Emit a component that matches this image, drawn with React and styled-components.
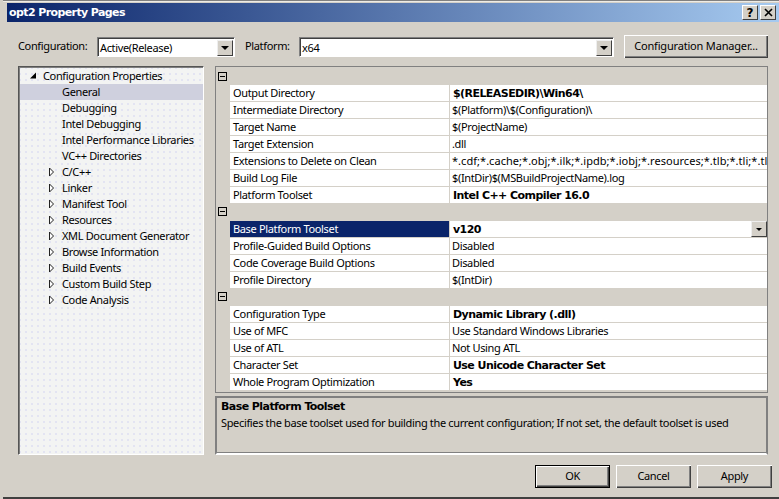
import React from "react";
import styled, { createGlobalStyle } from "styled-components";

const Global = createGlobalStyle`
  html, body { margin: 0; padding: 0; background: #d4d0c8; }
  * { box-sizing: border-box; }
`;

const FONT = `"Noto Sans", "Liberation Sans", sans-serif`;
const BOLD = `"DejaVu Sans", sans-serif`;
const TRACK = "-0.35px";
const BOLD_TRACK = "-0.56px";

const Win = styled.div`
  position: relative; width: 779px; height: 499px; overflow: hidden;
  background: #d4d0c8; font-family: ${FONT}; font-size: 11px; color: #000; letter-spacing: ${TRACK};
  border-left: 3px solid #d4d0c8;
  &::before { content: ""; position: absolute; left: -1px; top: 0; bottom: 0; width: 1px; background: #6f6f6f; }
  &::after { content: ""; position: absolute; left: -3px; right: 0; bottom: 0; height: 2px; background: #404040; }
`;
const TopEdge = styled.div`
  position: absolute; left: -3px; right: 0; top: 0; height: 2px;
  background: linear-gradient(#808080 0 1px, #eeece6 1px);
`;
const TitleBar = styled.div`
  position: absolute; left: 4px; right: 0; top: 3px; height: 19px;
  background: linear-gradient(90deg, #0a246a, #a6caf0);
  color: #fff; font: bold 11px ${BOLD};
  display: flex; align-items: center; padding-left: 2px;
`;
const TitleText = styled.span`flex: 1; letter-spacing: -0.6px;`;
const CapBtn = styled.button`
  width: 16px; height: 15px; margin-right: 2px; padding: 0; background: #d4d0c8;
  border: 1px solid; border-color: #fff #404040 #404040 #fff;
  display: flex; align-items: center; justify-content: center;
  color: #000; font: bold 12px ${BOLD}; line-height: 12px;
  &:last-child { margin-right: 3px; }
`;
const Label = styled.span`
  position: absolute; left: ${p => p.$x}px; top: 38px; height: 16px; line-height: 16px; white-space: nowrap;
`;
const Combo = styled.div`
  position: absolute; left: ${p => p.$x}px; top: 37px; width: ${p => p.$w}px; height: 20px;
  background: #fff; border: 1px solid; border-color: #808080 #fff #fff #808080;
  box-shadow: inset 1px 1px 0 #404040;
  padding: 1px 0 0 2px; line-height: 17px; display: flex; justify-content: space-between;
`;
const Arrow = styled.span`
  width: 16px; height: 16px; margin: 1px 1px 0 0; background: #d4d0c8; flex: none;
  border: 1px solid; border-color: #eee #404040 #404040 #eee;
  display: flex; align-items: center; justify-content: center;
  &::after { content: ""; border: 4px solid transparent; border-top: 4px solid #000; border-bottom: 0; }
`;
const PushBtn = styled.button`
  position: absolute; left: ${p => p.$x}px; top: ${p => p.$y}px; width: ${p => p.$w}px; height: ${p => p.$h}px;
  background: #d4d0c8; padding: 0 0 2px; font: 11px ${FONT}; letter-spacing: ${p => (p.$wide ? "-0.18px" : TRACK)}; color: #000;
  border: ${p => (p.$def ? "1px solid #000" : "0")};
  box-shadow: inset 1px 1px 0 #fff, inset -1px -1px 0 #404040, inset -2px -2px 0 #808080;
`;
const Tree = styled.div`
  position: absolute; left: 15px; top: 66px; width: 186px; height: 389px; padding: 1px 0 0 1px;
  background-color: #f3f4f3;
  background-image: radial-gradient(circle at 1px 1px, #e3e4f2 1px, transparent 1.2px);
  background-size: 6px 6px;
  border: 1px solid; border-color: #555 #fff #fff #555;
  box-shadow: inset 1px 1px 0 #808080;
`;
const TreeRow = styled.div`
  height: 16px; line-height: 16px; position: relative; white-space: nowrap;
  padding-left: ${p => p.$indent}px;
  background: ${p => (p.$sel ? "#cfd0de" : "transparent")};
`;
const Tri = styled.svg`position: absolute; left: ${p => p.$x}px; top: 3px;`;

const Grid = styled.div`
  position: absolute; left: 212px; top: 66px; width: 553px; height: 326px;
  border: 1px solid #808080; border-width: 1px 1px 0 1px; padding-top: 1px;
  background: #d4d0c8;
  box-shadow: 0 1px 0 #808080;
`;
const Cat = styled.div`height: ${p => p.$h}px; position: relative;`;
const Minus = styled.span`
  position: absolute; left: 2px; top: ${p => p.$t}px; width: 9px; height: 9px; border: 1px solid #000;
  &::after { content: ""; position: absolute; left: 1px; right: 1px; top: 3px; height: 1px; background: #000; }
`;
const Row = styled.div`
  height: 17px; margin-left: 14px; display: flex; background: #fff;
  border-bottom: 1px solid #d4d0c8;
  &:last-of-type { height: 16px; border-bottom: 0; }
`;
const Name = styled.div`
  width: 220px; flex: none; padding-left: 3px; line-height: 16px; white-space: nowrap;
  background: ${p => (p.$sel ? "#0a246a" : "#fff")}; color: ${p => (p.$sel ? "#fff" : "#000")};
  border-right: 1px solid #d4d0c8;
`;
const Value = styled.div`
  flex: 1; min-width: 0; overflow: hidden; white-space: nowrap; padding-left: ${p => (p.$b ? 3 : 2)}px;
  display: flex; justify-content: space-between; align-items: flex-start;
  font: ${p => (p.$b ? `bold 11px ${BOLD}` : `11px ${FONT}`)};
  line-height: ${p => (p.$b ? 18 : 16)}px;
  letter-spacing: ${p => (p.$b ? BOLD_TRACK : p.$wide ? "0.04px" : TRACK)};
`;
const RowArrow = styled.span`
  width: 16px; height: 16px; flex: none; background: #d4d0c8;
  border: 1px solid; border-color: #eee #404040 #404040 #eee;
  display: flex; align-items: center; justify-content: center;
  &::after { content: ""; border: 3px solid transparent; border-top: 3px solid #000; border-bottom: 0; }
`;
const Desc = styled.div`
  position: absolute; left: 212px; top: 396px; width: 553px; height: 59px;
  border: 2px solid; border-color: #808080 #808080 #fff #808080; padding: 1px 0 0 4px;
  box-shadow: inset 0 -1px 0 #808080;
`;
const DescTitle = styled.div`font: bold 11px ${BOLD}; height: 16px; line-height: 16px; letter-spacing: ${BOLD_TRACK};`;
const DescText = styled.div`height: 16px; line-height: 16px; white-space: nowrap;`;
const RowGroup = styled.section``;

const tree = [
  ["Configuration Properties", 23, "open"],
  ["General", 42, null, true],
  ["Debugging", 42], ["Intel Debugging", 42], ["Intel Performance Libraries", 42], ["VC++ Directories", 42],
  ["C/C++", 42, "closed"], ["Linker", 42, "closed"], ["Manifest Tool", 42, "closed"], ["Resources", 42, "closed"],
  ["XML Document Generator", 42, "closed"], ["Browse Information", 42, "closed"], ["Build Events", 42, "closed"],
  ["Custom Build Step", 42, "closed"], ["Code Analysis", 42, "closed"],
];
const groups = [
  { h: 17, t: 4, rows: [
    ["Output Directory", "$(RELEASEDIR)\\Win64\\", true],
    ["Intermediate Directory", "$(Platform)\\$(Configuration)\\"],
    ["Target Name", "$(ProjectName)"],
    ["Target Extension", ".dll"],
    ["Extensions to Delete on Clean", "*.cdf;*.cache;*.obj;*.ilk;*.ipdb;*.iobj;*.resources;*.tlb;*.tli;*.tlh;*.tmp;*.rsp", false, false, true],
    ["Build Log File", "$(IntDir)$(MSBuildProjectName).log"],
    ["Platform Toolset", "Intel C++ Compiler 16.0", true],
  ]},
  { h: 18, t: 4, rows: [
    ["Base Platform Toolset", "v120", true, true],
    ["Profile-Guided Build Options", "Disabled"],
    ["Code Coverage Build Options", "Disabled"],
    ["Profile Directory", "$(IntDir)"],
  ]},
  { h: 18, t: 4, rows: [
    ["Configuration Type", "Dynamic Library (.dll)", true],
    ["Use of MFC", "Use Standard Windows Libraries"],
    ["Use of ATL", "Not Using ATL"],
    ["Character Set", "Use Unicode Character Set", true],
    ["Whole Program Optimization", "Yes", true],
  ]},
];

export default function App() {
  return (
    <Win>
      <Global />
      <TopEdge />
      <TitleBar>
        <TitleText>opt2 Property Pages</TitleText>
        <CapBtn>?</CapBtn>
        <CapBtn>
          <svg width="9" height="9" viewBox="0 0 9 9"><path d="M1 1L8 8M8 1L1 8" stroke="#000" strokeWidth="1.6" /></svg>
        </CapBtn>
      </TitleBar>
      <Label $x={15}>Configuration:</Label>
      <Combo $x={94} $w={138}>Active(Release)<Arrow /></Combo>
      <Label $x={242}>Platform:</Label>
      <Combo $x={296} $w={315}>x64<Arrow /></Combo>
      <PushBtn $wide $x={621} $y={35} $w={144} $h={23}>Configuration Manager...</PushBtn>
      <Tree>
        {tree.map(([t, ind, kind, sel]) => (
          <TreeRow key={t} $indent={ind} $sel={sel}>
            {kind === "open" && (
              <Tri $x={9} width="9" height="9" viewBox="0 0 9 9"><path d="M7 1.5V7.5H1Z" fill="#000" /></Tri>
            )}
            {kind === "closed" && (
              <Tri $x={28} width="7" height="10" viewBox="0 0 7 10"><path d="M1.5 1V9L5.5 5Z" fill="#fff" stroke="#222" /></Tri>
            )}
            {t}
          </TreeRow>
        ))}
      </Tree>
      <Grid>
        {groups.map((g, i) => (
          <RowGroup key={i}>
            <Cat $h={g.h}><Minus $t={g.t} /></Cat>
            {g.rows.map(([n, v, b, sel, wide]) => (
              <Row key={n}>
                <Name $sel={sel}>{n}</Name>
                <Value $b={b} $wide={wide}>{v}{sel && <RowArrow />}</Value>
              </Row>
            ))}
          </RowGroup>
        ))}
      </Grid>
      <Desc>
        <DescTitle>Base Platform Toolset</DescTitle>
        <DescText>Specifies the base toolset used for building the current configuration; If not set, the default toolset is used</DescText>
      </Desc>
      <PushBtn $def $x={532} $y={465} $w={75} $h={23}>OK</PushBtn>
      <PushBtn $x={613} $y={465} $w={75} $h={23}>Cancel</PushBtn>
      <PushBtn $x={694} $y={465} $w={75} $h={23}>Apply</PushBtn>
    </Win>
  );
}
